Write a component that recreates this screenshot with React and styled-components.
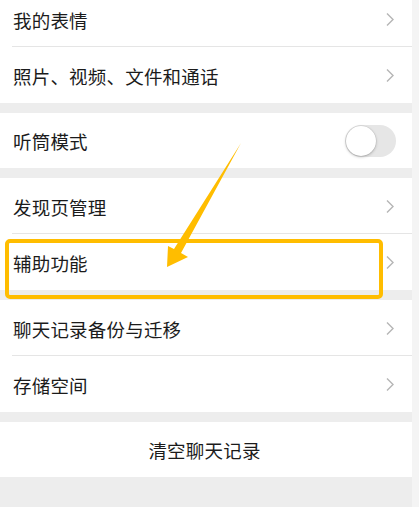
import React from 'react';
import styled, { createGlobalStyle } from 'styled-components';

const GlobalStyle = createGlobalStyle`
    html, body {
        margin: 0;
        padding: 0;
        background: #ededed;
    }
    body {
        font-family: "Noto Sans CJK SC", "Noto Sans", sans-serif;
        -webkit-font-smoothing: antialiased;
    }
`;

const Page = styled.div`
    position: relative;
    display: flex;
    width: 419px;
    height: 507px;
    overflow: hidden;
    background: #ededed;
`;

const Content = styled.div`
    flex: 0 0 412px;
    display: flex;
    flex-direction: column;
    margin-top: -9px;
`;

const ScrollStrip = styled.div`
    flex: 1;
    background: #f4f4f4;
`;

const Section = styled.div`
    background: #fff;
    margin-bottom: 10px;
`;

const Row = styled.div`
    position: relative;
    display: flex;
    align-items: center;
    justify-content: ${p => (p.center ? 'center' : 'space-between')};
    box-sizing: border-box;
    height: ${p => (p.divided ? 57 : 55)}px;
    padding: 0 16px 0 13px;
    &:after {
        content: ${p => (p.divided ? "''" : 'none')};
        position: absolute;
        left: 12px;
        right: 0;
        bottom: 1px;
        height: 1px;
        background: #e5e5e5;
    }
`;

const Label = styled.span`
    font-size: 18.5px;
    color: #1b1b1b;
    letter-spacing: 0.2px;
`;

const Arrow = styled.svg`
    width: 10px;
    height: 15px;
    margin-right: 1px;
`;

const Switch = styled.div`
    position: relative;
    width: 51px;
    height: 32px;
    border-radius: 16px;
    background: #e6e6e6;
    &:before {
        content: '';
        position: absolute;
        left: 1px;
        top: 1px;
        width: 30px;
        height: 30px;
        border-radius: 50%;
        background: #fff;
        box-shadow: 0 1px 3px rgba(0, 0, 0, 0.25), 0 0 0 0.5px rgba(0, 0, 0, 0.08);
    }
`;

const Highlight = styled.div`
    position: absolute;
    left: 5px;
    top: 239px;
    width: 378px;
    height: 60px;
    box-sizing: border-box;
    border: 4.5px solid #ffbd00;
    border-radius: 5px;
    pointer-events: none;
`;

const Pointer = styled.svg`
    position: absolute;
    left: 0;
    top: 0;
    width: 419px;
    height: 507px;
    pointer-events: none;
`;

const Chevron = () => (
    <Arrow viewBox="0 0 10 15">
        <path d="M2 1.5 L8 7.5 L2 13.5" fill="none" stroke="#b5b5b5" strokeWidth="1.4" />
    </Arrow>
);

const Item = ({ label, divided, toggle }) => (
    <Row divided={divided}>
        <Label>{label}</Label>
        {toggle ? <Switch /> : <Chevron />}
    </Row>
);

export default function App() {
    return (
        <Page>
            <GlobalStyle />
            <Content>
                <Section>
                    <Item label="我的表情" divided />
                    <Item label="照片、视频、文件和通话" />
                </Section>
                <Section>
                    <Item label="听筒模式" toggle />
                </Section>
                <Section>
                    <Item label="发现页管理" divided />
                    <Item label="辅助功能" />
                </Section>
                <Section>
                    <Item label="聊天记录备份与迁移" divided />
                    <Item label="存储空间" />
                </Section>
                <Section>
                    <Row center>
                        <Label>清空聊天记录</Label>
                    </Row>
                </Section>
            </Content>
            <ScrollStrip />
            <Highlight />
            <Pointer viewBox="0 0 419 507">
                <polygon
                    points="241,143 181,253 188,257 167,267 168,246 174,249"
                    fill="#ffbd00"
                />
            </Pointer>
        </Page>
    );
}
